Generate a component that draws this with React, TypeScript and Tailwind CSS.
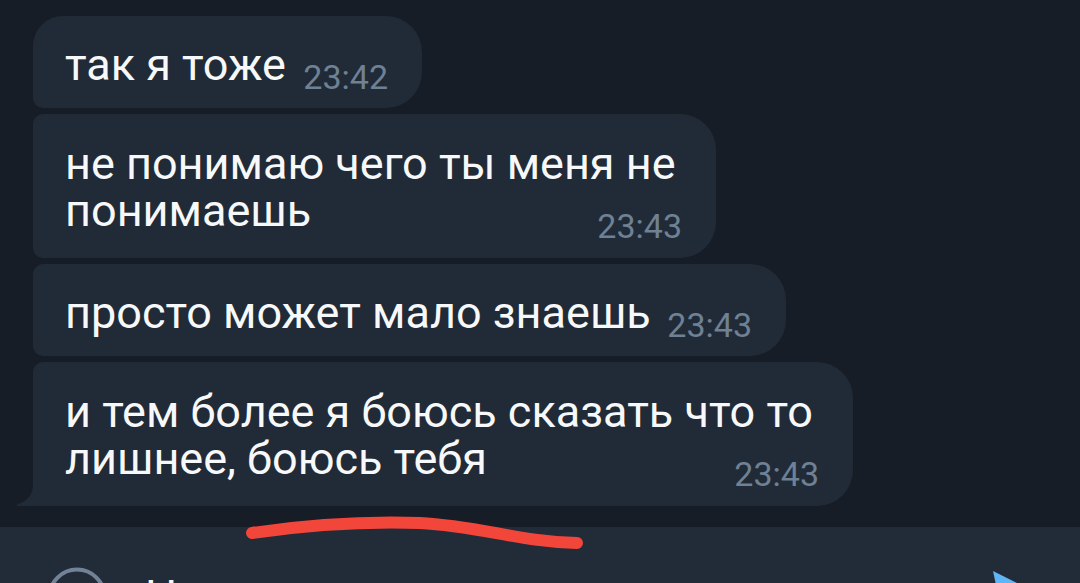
import React from "react";

function Time({ children }: { children: React.ReactNode }) {
  return (
    <span className="text-[34px] leading-[40px] text-[#6f8194] shrink-0">
      {children}
    </span>
  );
}

function SingleBubble({
  text,
  time,
  width,
  corners,
}: {
  text: string;
  time: string;
  width: string;
  corners: string;
}) {
  return (
    <div
      className={`${width} ${corners} bg-[#212b37] pl-[32px] pr-[34px] pt-[25px] pb-[11px] flex items-end justify-between`}
    >
      <span className="text-[45px] leading-[47px] mb-[9px] text-[#f7f8f9] whitespace-nowrap">
        {text}
      </span>
      <Time>{time}</Time>
    </div>
  );
}

function DoubleBubble({
  first,
  second,
  time,
  width,
  corners,
  tail,
}: {
  first: string;
  second: string;
  time: string;
  width: string;
  corners: string;
  tail?: boolean;
}) {
  return (
    <div
      className={`${width} ${corners} relative bg-[#212b37] pl-[32px] pr-[34px] pt-[26px] pb-[12px] flex flex-col`}
    >
      <span className="text-[45px] leading-[47px] text-[#f7f8f9] whitespace-nowrap">
        {first}
      </span>
      <div className="flex items-end justify-between">
        <span className="text-[45px] leading-[47px] mb-[12px] text-[#f7f8f9] whitespace-nowrap">
          {second}
        </span>
        <Time>{time}</Time>
      </div>
      {tail && (
        <svg
          className="absolute left-[-17px] bottom-0"
          width="18"
          height="22"
          viewBox="0 0 18 22"
        >
          <path
            d="M18 0 L17 0 C17 10 12 17 2 20 Q0 20.8 1 22 L18 22 Z"
            fill="#212b37"
          />
        </svg>
      )}
    </div>
  );
}

export default function App() {
  return (
    <div className="relative w-[1080px] h-[583px] overflow-hidden bg-[#171d26] font-['Roboto',sans-serif] flex flex-col">
      <div className="flex-1 pt-[16px] pl-[33px] flex flex-col items-start gap-[6px]">
        <SingleBubble
          text="так я тоже"
          time="23:42"
          width="w-[389px]"
          corners="rounded-tl-[30px] rounded-bl-[10px] rounded-r-[36px]"
        />
        <DoubleBubble
          first="не понимаю чего ты меня не"
          second="понимаешь"
          time="23:43"
          width="w-[683px]"
          corners="rounded-l-[10px] rounded-r-[36px]"
        />
        <SingleBubble
          text="просто может мало знаешь"
          time="23:43"
          width="w-[753px]"
          corners="rounded-l-[10px] rounded-r-[36px]"
        />
        <DoubleBubble
          first="и тем более я боюсь сказать что то"
          second="лишнее, боюсь тебя"
          time="23:43"
          width="w-[820px]"
          corners="rounded-tl-[10px] rounded-r-[36px]"
          tail
        />
      </div>

      <div className="h-[56px] shrink-0 bg-[#222c38] flex items-start pl-[47px] pr-[23px] pt-[40px] overflow-hidden">
        <svg width="60" height="60" viewBox="0 0 60 60" className="shrink-0">
          <circle cx="30" cy="30" r="27.5" fill="none" stroke="#728397" strokeWidth="4" />
        </svg>
        <span className="ml-[38px] mt-[6px] text-[45px] leading-[47px] text-[#f7f8f9] whitespace-nowrap">
          Написать
        </span>
        <svg width="64" height="64" viewBox="0 0 64 64" className="ml-auto mt-[4px] shrink-0">
          <path d="M0 0 L64 32 L0 64 L6 36 L40 32 L6 28 Z" fill="#5fb6f7" />
        </svg>
      </div>

      <svg
        className="absolute left-0 top-0 pointer-events-none"
        width="1080"
        height="583"
        viewBox="0 0 1080 583"
      >
        <path
          d="M252 533 C 300 526, 360 521, 420 523 C 480 526, 520 542, 577 543"
          fill="none"
          stroke="#f2463b"
          strokeWidth="12"
          strokeLinecap="round"
        />
      </svg>
    </div>
  );
}
